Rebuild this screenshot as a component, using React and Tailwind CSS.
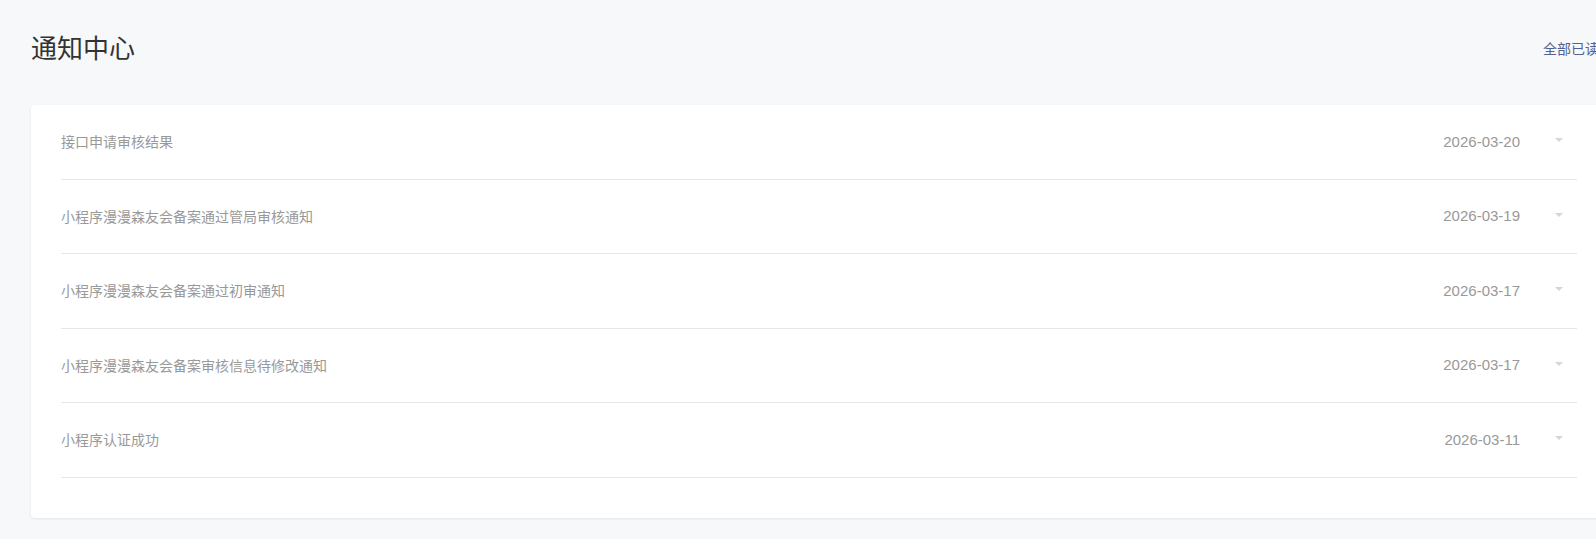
import React from 'react';

const notices = [
  { title: '接口申请审核结果', date: '2026-03-20' },
  { title: '小程序漫漫森友会备案通过管局审核通知', date: '2026-03-19' },
  { title: '小程序漫漫森友会备案通过初审通知', date: '2026-03-17' },
  { title: '小程序漫漫森友会备案审核信息待修改通知', date: '2026-03-17' },
  { title: '小程序认证成功', date: '2026-03-11' },
];

const font = "font-['Noto_Sans_CJK_SC',sans-serif]";

export default function App() {
  return (
    <div className={`min-h-screen bg-[#f7f8fa] overflow-hidden ${font}`}>
      <div className="w-[1638px] px-[31px] pt-[28px]">
        {/* 标题 */}
        <div className="h-[38px] flex items-center justify-between">
          <h1 className="text-[26px] leading-none text-[#333333] font-normal">通知中心</h1>
          <button className="text-[14px] text-[#52618f] pr-[8px] mt-[2px]">全部已读</button>
        </div>

        {/* 列表 */}
        <div className="mt-[39px] bg-white rounded-[4px] shadow-[0_1px_3px_rgba(0,0,0,0.08)] px-[30px] pb-[40px]">
          {notices.map((n, i) => (
            <div key={i} className="h-[74.5px] border-b border-[#e6e6e8] flex items-center justify-between">
              <span className="text-[14px] text-[#999999]">{n.title}</span>
              <div className="flex items-center">
                <span className="text-[15px] text-[#999999] font-['Liberation_Sans',sans-serif]">{n.date}</span>
                <span className="ml-[35px] mr-[14px] -mt-[3px] w-0 h-0 border-x-[4px] border-t-[4px] border-x-transparent border-t-[#d6d6d6]" />
              </div>
            </div>
          ))}
        </div>
      </div>
    </div>
  );
}
